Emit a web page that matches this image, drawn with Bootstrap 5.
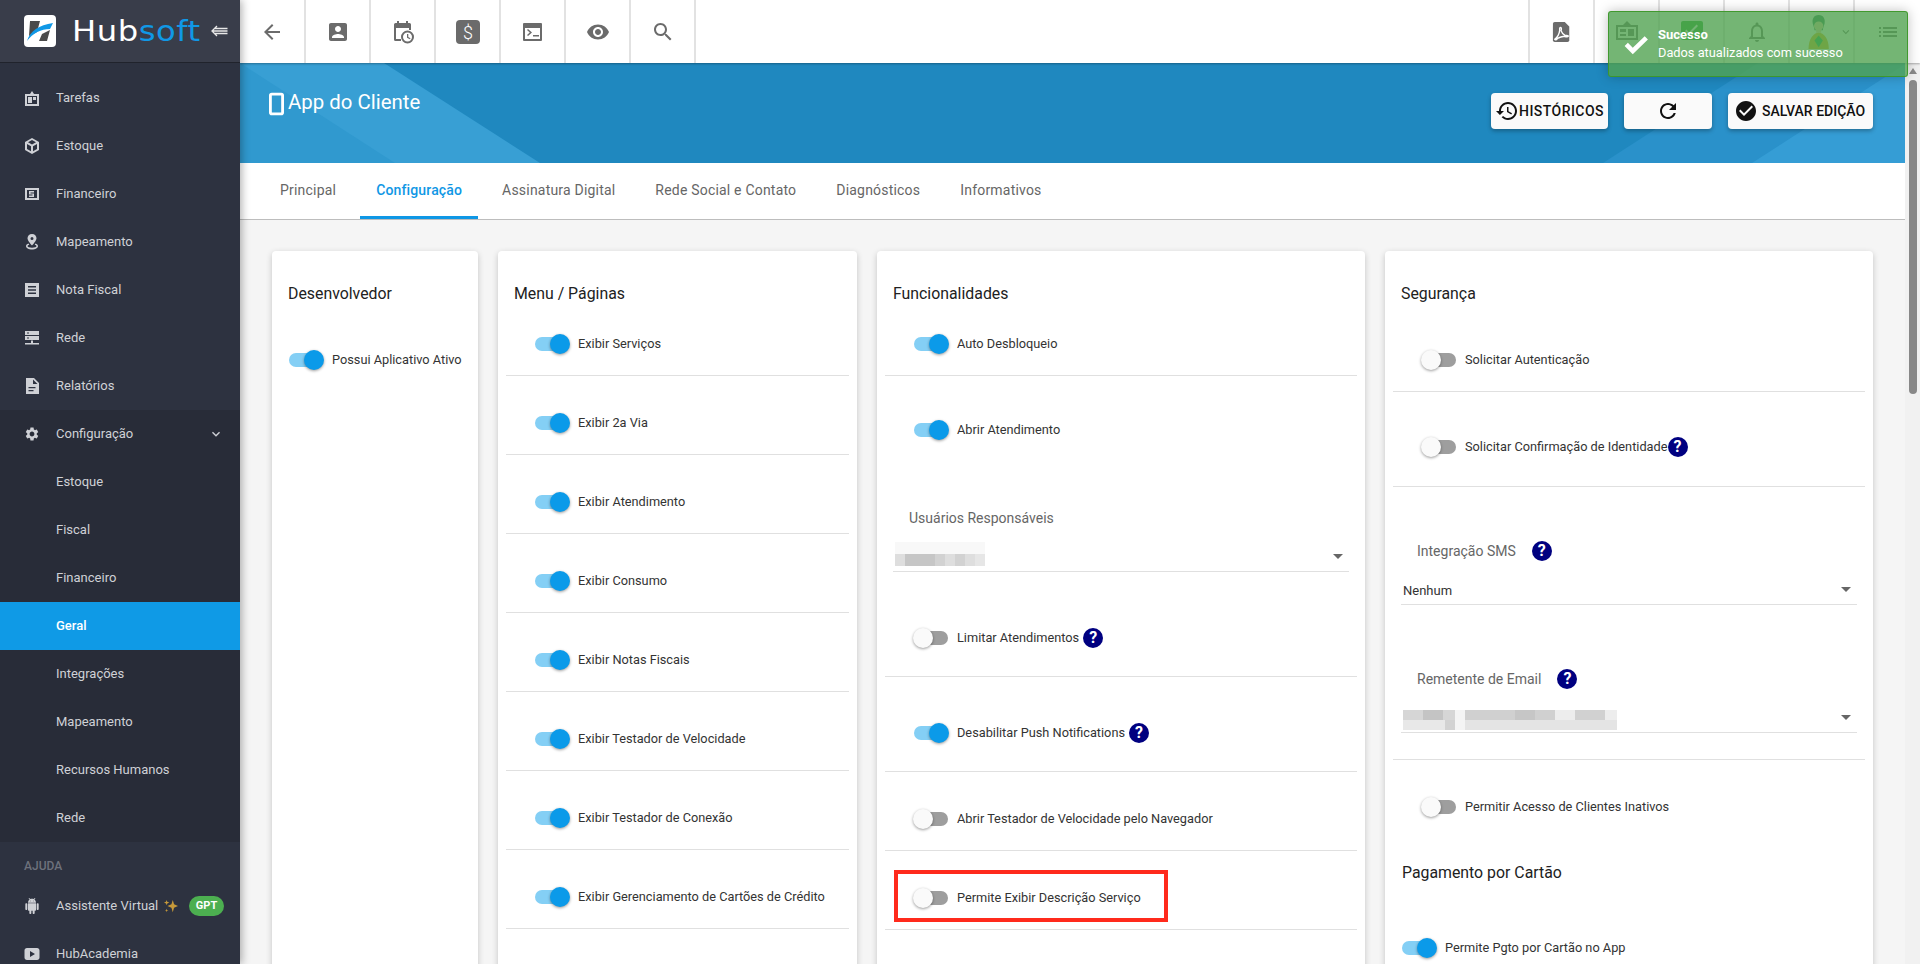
<!DOCTYPE html>
<html lang="pt-BR">
<head>
<meta charset="utf-8">
<title>App do Cliente</title>
<link href="https://cdn.jsdelivr.net/npm/bootstrap@5.3.0/dist/css/bootstrap.min.css" rel="stylesheet">
<style>
html,body{height:964px;overflow:hidden}
body{font-family:Roboto,"Liberation Sans",sans-serif;background:#f5f5f5;color:#333;font-size:12.75px}
.side{width:240px;height:964px;flex:none;background:#2d3240;color:#cfd1d6;box-shadow:2px 0 8px rgba(0,0,0,.3);z-index:3;overflow:hidden}
.side-head{height:63px;flex:none;background:#393d4a;border-bottom:1px solid #20232c;padding-left:24px;margin-bottom:11px}
.logo-box{width:32px;height:32px;background:#fff;border-radius:4px;flex:none}
.logo-word{font-family:"DejaVu Sans",sans-serif;font-size:29px;line-height:32px;color:#fff;margin-left:16px;letter-spacing:.5px;font-weight:400;width:130px;white-space:nowrap;transform:scaleX(1.11);transform-origin:left center}
.logo-word span{color:#1098e6}
.back-arrows{margin-left:9px}
.s-item{height:48px;flex:none;padding-left:24px;font-size:13px;color:#cfd1d6}
.s-item svg.ic{width:16px;height:16px;fill:#cfd1d6;flex:none;margin-right:16px}
.s-sub{background:#282c38;flex:none}
.s-sub .s-item.sub{padding-left:56px}
.s-item.on{background:#0f9ae6;color:#fff;font-weight:500}
.s-chev{margin-left:auto;margin-right:16px;width:16px;height:16px;fill:#cfd1d6}
.s-cap{height:40px;flex:none;padding:17px 0 0 24px;font-size:12px;font-weight:500;color:#6d717c;line-height:14px}
.gpt{background:#4caf50;color:#fff;font-weight:700;font-size:11px;border-radius:10px;width:35px;height:20px;margin-left:auto;margin-right:16px;line-height:20px;text-align:center}
.spark{width:14px;height:14px;fill:#c79a3a;margin-left:6px}
.main-col{min-width:0}
.topbar{height:63px;background:#fff;flex:none;box-shadow:0 1px 2px rgba(0,0,0,.3);z-index:2}
.t-cell{width:65px;height:63px;border-right:2px solid #e2e2e2;flex:none}
.t-cell:first-child{width:66px}
.t-cell svg{fill:#6b6b6b}
.t-right{margin-left:auto}
.t-right .t-cell:first-child{width:65px;box-shadow:-2px 0 0 #e2e2e2}
.t-right .t-cell:last-child{border-right:0}
.under{min-height:0}
.page{min-width:0;overflow:hidden}
.hero{height:100px;background:#1f88bf;color:#fff;padding:0 32px 0 29px}
.hero-art{left:0;top:0;width:100%;height:100%}
.hero-title{font-size:20.4px;line-height:28px;margin-top:25px}
.hero-btn{height:36px;background:#fafafa;border:0;border-radius:4px;box-shadow:0 2px 4px rgba(0,0,0,.3);color:#111;font-size:14px;font-weight:500;letter-spacing:.45px;padding:0}
.hb1{width:117px}.hb2{width:88px}.hb3{width:145px;letter-spacing:0;padding-left:6px}
.hero-btns{gap:16px;margin-top:30px}
.tabs-bar{height:57px;background:#fff;border-bottom:1px solid #bdbdbd;padding-left:24px;gap:8px}
.tab-i{padding:0 16px;line-height:54px;font-size:14px;color:#666;font-weight:400;letter-spacing:.2px;height:56px}
.tab-i.act{color:#0f97e5;font-weight:500;letter-spacing:.15px;border-bottom:3px solid #0f97e5}
.cards{padding:31px 32px 0;gap:20px;height:800px}
.cardx{background:#fff;border-radius:4px;box-shadow:0 2px 6px rgba(0,0,0,.2);padding:0 8px;flex:none;border:0}
.w1{width:206px}.w2{width:359px}.w3{width:488px}.w4{width:488px}
.c-title{padding:31px 0 0 8px;font-size:15.85px;line-height:24px;color:#212121;margin-bottom:-9px;font-weight:400}
.rw{padding:37px 8px 21px 29px;line-height:20px;color:#333;border-bottom:1px solid #e0e0e0}
.rw.tall{padding:46px 8px 28px 29px}
.rw.dev{border:0;padding:53px 0 0 9px}
.sw{position:relative;width:34px;height:14px;border-radius:7px;background:#9e9e9e;flex:none;margin-right:9px}
.sw::after{content:"";position:absolute;left:-1px;top:-3px;width:20px;height:20px;border-radius:50%;background:#fafafa;box-shadow:0 1px 3px rgba(0,0,0,.4)}
.sw.ok{background:#84cff5}
.sw.ok::after{left:15px;background:#0b9ae9}
.qm{width:20px;height:20px;border-radius:50%;background:#000080;color:#fff;font-weight:700;font-size:16px;line-height:20px;text-align:center;flex:none;display:inline-block}
.fld-lab{height:20px;line-height:20px;padding-left:16px;margin-left:8px;color:#666;font-size:14px}
.fld-lab .qm{margin-left:16px}
.fld{height:44px;margin:0 8px;border-bottom:1px solid #e0e0e0;position:relative;font-size:13px;color:#333}
.fld-arrow{position:absolute;right:6px;top:26px;width:0;height:0;border-left:5px solid transparent;border-right:5px solid transparent;border-top:5px solid #666}
.fld-val{position:absolute;left:2px;bottom:3px;line-height:20px}
.mosaic{position:absolute;left:2px;display:block}
.mk1{top:14px}.mk2{top:21px}
.red-mark{position:absolute;left:9px;top:19px;width:274px;height:52px;border:4px solid #ff2a1c;pointer-events:none}
.rel{position:relative}
.sb{width:15px;flex:none;background:#f1f1f1;position:relative}
.sb-up{width:0;height:0;border-left:4px solid transparent;border-right:4px solid transparent;border-bottom:6px solid #8a8a8a;margin:5px auto 0}
.sb-th{width:8px;height:314px;background:#888;border-radius:4px;margin:6px auto 0}
.toastx{position:absolute;left:1608px;top:11px;width:300px;height:66px;background:rgba(81,163,81,.8);border:1px solid rgba(60,150,40,.9);border-radius:3px;box-shadow:0 0 12px rgba(0,0,0,.25);color:#fff;z-index:9;font-size:12.8px;line-height:18px;padding:14px 0 0 49px}
.toastx b{display:block;font-weight:700;font-size:13px}
.toast-ic{position:absolute;left:14px;top:21px;width:26px;height:26px;fill:#fff}
.mt-a{margin-top:54px}.mt-b{margin-top:64px}.mt-c{margin-top:68px}
.gap10{margin-bottom:10px}
.hr-x{border-bottom:1px solid #e0e0e0;height:27px}
.atd{padding:44px 0 0 29px;line-height:20px}
.sec1{padding-top:53px;padding-bottom:21px}
.rw.sec1{padding-top:53px}
.rw.sec2{padding:45px 8px 29px 29px}
.inat{padding:37px 0 0 29px;line-height:20px}
.pag{padding:44px 0 0 9px;font-size:15.85px;line-height:24px;color:#212121}
.pgto{padding:53px 0 0 9px;line-height:20px}
</style>
</head>
<body class="d-flex">

<aside class="side d-flex flex-column">
  <div class="side-head d-flex align-items-center">
    <svg class="logo-box" viewBox="0 0 32 32"><path fill="#4a4a4a" d="M6 6h10l-3 11-8 4zM18 19l8-4-3 11h-8z"/><path fill="#1098e6" d="M3 26C6 16 15 10 29 8l-3 6C17 14 9 18 3 26z"/></svg>
    <div class="logo-word">Hub<span>soft</span></div>
    <svg class="back-arrows" width="17" height="12" viewBox="0 0 17 12" fill="none" stroke="#e8e8e8" stroke-width="1.300"><path d="M6 1L1 6l5 5M4 3.500h12.500M2 6h14.500M4 8.500h12.500"/></svg>
  </div>
  <div class="s-item d-flex align-items-center"><svg class="ic" viewBox="0 0 16 16"><path fill-rule="evenodd" d="M1 4h5l2-3 2 3h5v12H1zM3 6v8h10V6zM4 7h4v6H4zM9 7h3v3H9z"/></svg>Tarefas</div>
  <div class="s-item d-flex align-items-center"><svg class="ic" viewBox="0 0 16 16"><path fill-rule="evenodd" d="M8 0l7 4v8l-7 4-7-4V4zM8 2L4 4.300 8 6.600l4-2.300zM3 6v5l4 2.300V8.300zM13 6L9 8.300v5l4-2.300z"/></svg>Estoque</div>
  <div class="s-item d-flex align-items-center"><svg class="ic" viewBox="0 0 16 16"><path fill-rule="evenodd" d="M1 2h14v12H1zM3 4v8h10V4zM5 5h5v1.500H6.500v1H10V11H5V9.500h3.500v-1H5z"/></svg>Financeiro</div>
  <div class="s-item d-flex align-items-center"><svg class="ic" viewBox="0 0 16 16"><path fill-rule="evenodd" d="M8 0c2.800 0 4.500 2 4.500 4.300C12.500 7 8 11.500 8 11.500S3.500 7 3.500 4.300C3.500 2 5.200 0 8 0zm0 3a1.500 1.500 0 100 3 1.500 1.500 0 000-3z"/><path d="M2 12c0-1.200 1-2 2.500-2.500l.8 1.200C4.300 11 3.500 11.500 3.500 12c0 1 2 1.700 4.500 1.700s4.500-.7 4.500-1.700c0-.5-.8-1-1.800-1.300l.8-1.200C13 10 14 10.800 14 12c0 2-2.700 3.500-6 3.500S2 14 2 12z"/></svg>Mapeamento</div>
  <div class="s-item d-flex align-items-center"><svg class="ic" viewBox="0 0 16 16"><path fill-rule="evenodd" d="M1 1h14v14H1zM4 4v1.500h8V4zM4 7.200v1.500h8V7.200zM4 10.500V12h8v-1.500z"/></svg>Nota Fiscal</div>
  <div class="s-item d-flex align-items-center"><svg class="ic" viewBox="0 0 16 16"><path fill-rule="evenodd" d="M1 1h14v4H1zM1 6h14v4H1zM3 2.500V3.500h2v-1zM3 7.500V8.500h2v-1zM7 10.500h2V13h6v1.500H1V13h6z"/></svg>Rede</div>
  <div class="s-item d-flex align-items-center"><svg class="ic" viewBox="0 0 16 16"><path fill-rule="evenodd" d="M2 0h8l5 5v11H2zM9 1.500V6h4.500zM4.500 9v1.300h7V9zM4.500 12v1.300h5V12z"/></svg>Relatórios</div>
  <div class="s-sub">
    <div class="s-item d-flex align-items-center"><svg class="ic" viewBox="0 0 24 24"><path d="M19.140 12.940c.04-.3.06-.61.06-.94 0-.32-.02-.64-.07-.94l2.030-1.580c.18-.14.23-.41.12-.61l-1.920-3.320c-.12-.22-.37-.29-.59-.22l-2.390.96c-.5-.38-1.030-.7-1.620-.94l-.36-2.540c-.04-.24-.24-.41-.48-.41h-3.840c-.24 0-.43.17-.47.41l-.36 2.540c-.59.24-1.130.57-1.620.94l-2.390-.96c-.22-.08-.47 0-.59.22L2.740 8.870c-.12.21-.08.47.12.61l2.030 1.580c-.05.3-.09.63-.09.94s.02.64.07.94l-2.030 1.580c-.18.14-.23.41-.12.61l1.920 3.320c.12.22.37.29.59.22l2.390-.96c.5.38 1.030.7 1.620.94l.36 2.540c.05.24.24.41.48.41h3.840c.24 0 .44-.17.47-.41l.36-2.540c.59-.24 1.130-.56 1.620-.94l2.390.96c.22.08.47 0 .59-.22l1.920-3.320c.12-.22.07-.47-.12-.61l-2.010-1.580zM12 15.600c-1.980 0-3.600-1.620-3.600-3.600s1.620-3.600 3.600-3.600 3.600 1.620 3.600 3.600-1.620 3.600-3.600 3.600z"/></svg>Configuração<svg class="s-chev" viewBox="0 0 24 24"><path d="M16.590 8.590L12 13.170 7.410 8.590 6 10l6 6 6-6z"/></svg></div>
    <div class="s-item sub d-flex align-items-center">Estoque</div>
    <div class="s-item sub d-flex align-items-center">Fiscal</div>
    <div class="s-item sub d-flex align-items-center">Financeiro</div>
    <div class="s-item sub on d-flex align-items-center">Geral</div>
    <div class="s-item sub d-flex align-items-center">Integrações</div>
    <div class="s-item sub d-flex align-items-center">Mapeamento</div>
    <div class="s-item sub d-flex align-items-center">Recursos Humanos</div>
    <div class="s-item sub d-flex align-items-center">Rede</div>
  </div>
  <div class="s-cap">AJUDA</div>
  <div class="s-item d-flex align-items-center"><svg class="ic" viewBox="0 0 24 24"><path d="M6 18c0 .55.45 1 1 1h1v3.500c0 .83.67 1.500 1.500 1.500s1.500-.67 1.500-1.500V19h2v3.500c0 .83.67 1.500 1.500 1.500s1.500-.67 1.500-1.500V19h1c.55 0 1-.45 1-1V8H6v10zM3.500 8C2.670 8 2 8.670 2 9.500v7c0 .83.67 1.500 1.500 1.500S5 17.330 5 16.500v-7C5 8.670 4.330 8 3.500 8zm17 0c-.83 0-1.500.67-1.500 1.500v7c0 .83.67 1.500 1.500 1.500s1.500-.67 1.500-1.500v-7c0-.83-.67-1.500-1.500-1.500zm-4.970-5.840l1.300-1.300c.2-.2.2-.51 0-.71-.2-.2-.51-.2-.71 0l-1.480 1.480C13.850 1.230 12.950 1 12 1c-.96 0-1.860.23-2.660.63L7.850.15c-.2-.2-.51-.2-.71 0-.2.2-.2.51 0 .71l1.310 1.310C6.970 3.260 6 5.010 6 7h12c0-1.990-.97-3.750-2.470-4.840zM10 5H9V4h1v1zm5 0h-1V4h1v1z"/></svg>Assistente Virtual<svg class="spark" viewBox="0 0 16 16"><path d="M10 1l1.500 5L16 8l-4.500 2L10 15l-1.500-5L4 8l4.500-2zM3 1l.7 2L6 4l-2.300 1L3 7l-.7-2L0 4l2.300-1zM3 11l.5 1.500L5 13l-1.500.5L3 15l-.5-1.500L1 13l1.500-.5z"/></svg><span class="gpt">GPT</span></div>
  <div class="s-item d-flex align-items-center"><svg class="ic" viewBox="0 0 16 16"><path fill-rule="evenodd" d="M3 2h10c1.500 0 2.500 1 2.500 2.500v7c0 1.500-1 2.500-2.500 2.500H3c-1.500 0-2.500-1-2.500-2.500v-7C.5 3 1.500 2 3 2zm3 3v6l5-3z"/></svg>HubAcademia</div>
</aside>

<div class="main-col flex-grow-1 d-flex flex-column">
  <header class="topbar d-flex">
    <div class="t-cell d-flex align-items-center justify-content-center"><svg width="24" height="24" viewBox="0 0 24 24"><path d="M20 11H7.830l5.590-5.590L12 4l-8 8 8 8 1.410-1.410L7.830 13H20v-2z"/></svg></div>
    <div class="t-cell d-flex align-items-center justify-content-center"><svg width="24" height="24" viewBox="0 0 24 24"><path d="M3 5v14c0 1.100.89 2 2 2h14c1.100 0 2-.9 2-2V5c0-1.100-.9-2-2-2H5c-1.110 0-2 .9-2 2zm12 4c0 1.660-1.340 3-3 3s-3-1.340-3-3 1.340-3 3-3 3 1.340 3 3zm-9 8c0-2 4-3.100 6-3.100s6 1.100 6 3.100v1H6v-1z"/></svg></div>
    <div class="t-cell d-flex align-items-center justify-content-center"><svg width="24" height="24" viewBox="0 0 24 24"><path fill-rule="evenodd" d="M6 1h2v2h7V1h2v2h1.500A1.500 1.500 0 0120 4.500V10h-2V8H5v11h5v2H4.500A1.500 1.500 0 013 19.500v-15A1.500 1.500 0 014.500 3H6z"/><path fill-rule="evenodd" d="M16.500 10.500a6.500 6.500 0 110 13 6.500 6.500 0 010-13zm0 2a4.500 4.500 0 100 9 4.500 4.500 0 000-9zM16 14h1.300v3l2.200 1.300-.6 1L16 17.700z"/></svg></div>
    <div class="t-cell d-flex align-items-center justify-content-center"><svg width="24" height="24" viewBox="0 0 24 24"><rect width="24" height="24" rx="4"/><text x="12" y="18.500" text-anchor="middle" font-family="Roboto,sans-serif" font-size="18" font-weight="300" fill="#fff">$</text></svg></div>
    <div class="t-cell d-flex align-items-center justify-content-center"><svg width="24" height="24" viewBox="0 0 24 24"><path fill-rule="evenodd" d="M3 3h17a1 1 0 011 1v16a1 1 0 01-1 1H3a1 1 0 01-1-1V4a1 1 0 011-1zm1 5v11h15V8z"/><path d="M6 10l1-1 4 3.500-4 3.500-1-1 2.800-2.500zM12 15h6v1.500h-6z"/></svg></div>
    <div class="t-cell d-flex align-items-center justify-content-center"><svg width="24" height="24" viewBox="0 0 24 24"><path d="M12 4.500C7 4.500 2.730 7.610 1 12c1.730 4.390 6 7.500 11 7.500s9.270-3.110 11-7.500c-1.730-4.390-6-7.500-11-7.500zM12 17c-2.760 0-5-2.240-5-5s2.240-5 5-5 5 2.240 5 5-2.240 5-5 5zm0-8c-1.660 0-3 1.340-3 3s1.340 3 3 3 3-1.340 3-3-1.340-3-3-3z"/></svg></div>
    <div class="t-cell d-flex align-items-center justify-content-center"><svg width="24" height="24" viewBox="0 0 24 24"><path d="M15.500 14h-.79l-.28-.27C15.410 12.590 16 11.110 16 9.500 16 5.910 13.090 3 9.500 3S3 5.910 3 9.500 5.910 16 9.500 16c1.610 0 3.090-.59 4.230-1.570l.27.28v.79l5 4.990L20.490 19l-4.990-5zm-6 0C7.010 14 5 11.990 5 9.500S7.010 5 9.500 5 14 7.010 14 9.500 11.990 14 9.500 14z"/></svg></div>
    <div class="t-right d-flex">
      <div class="t-cell d-flex align-items-center justify-content-center"><svg width="20" height="20" viewBox="0 0 22 22"><path d="M3 0h11l5 5v15a2 2 0 01-2 2H3a2 2 0 01-2-2V2a2 2 0 012-2z"/><path d="M3 19c3-2 5-6 5.500-10-.3-1.500 0-3 1-3s1 2 .5 3.500C11 12 13 14 14 14.500c2 0 4 0 4 1s-2 1-4.500.2C11 16 8 17 6 18c-1 2-2.500 2-3 1z" fill="none" stroke="#fff" stroke-width="1.500"/></svg></div>
      <div class="t-cell d-flex align-items-center justify-content-center"><svg width="24" height="24" viewBox="0 0 24 24"><path fill-rule="evenodd" d="M1 5h7l4-4 4 4h7v15H1zM3 7v11h18V7zM5 9h6v3H5zM5 14h6v2H5zM13 9h6v7h-6z"/></svg></div>
      <div class="t-cell d-flex align-items-center justify-content-center"><svg width="24" height="24" viewBox="0 0 24 24"><rect x="1" y="1" width="22" height="19" rx="2" fill="#22a52a"/><path d="M9 15l-4-4 1.400-1.400L9 12.200l7.600-7.600L18 6z" fill="#fff"/></svg></div>
      <div class="t-cell d-flex align-items-center justify-content-center"><svg width="24" height="24" viewBox="0 0 24 24"><path d="M12 22c1.100 0 2-.9 2-2h-4c0 1.100.9 2 2 2zm6-6v-5c0-3.070-1.630-5.640-4.500-6.320V4c0-.83-.67-1.500-1.500-1.500s-1.500.67-1.500 1.500v.68C7.640 5.360 6 7.920 6 11v5l-2 2v1h16v-1l-2-2zm-2 1H8v-6c0-2.480 1.510-4.500 4-4.500s4 2.020 4 4.500v6z"/></svg></div>
      <div class="t-cell d-flex align-items-center justify-content-start ps-3"><svg width="26" height="38" viewBox="0 0 30 40"><path d="M15 0c6 0 8 5 7 10-1 3-2 6-2 8H10c0-2-1-5-2-8C7 5 9 0 15 0z" fill="#2e7d5b"/><circle cx="15" cy="13" r="5.500" fill="#ecc7a5"/><path d="M12 17h6v4h-6z" fill="#ecc7a5"/><path d="M3 40c0-12 6-19 12-19s12 7 12 19z" fill="#e2ad1c"/><path d="M10 30l5-6 5 6-5 8z" fill="#18a34d"/></svg><svg width="14" height="14" viewBox="0 0 24 24" class="ms-2"><path d="M16.590 8.590L12 13.170 7.410 8.590 6 10l6 6 6-6z"/></svg></div>
      <div class="t-cell d-flex align-items-center justify-content-center"><svg width="24" height="24" viewBox="0 0 24 24"><path d="M3 13h2v-2H3v2zm0 4h2v-2H3v2zm0-8h2V7H3v2zm4 4h14v-2H7v2zm0 4h14v-2H7v2zM7 7v2h14V7H7z"/></svg></div>
    </div>
  </header>

  <div class="under flex-grow-1 d-flex">
    <div class="page flex-grow-1">
      <section class="hero position-relative d-flex justify-content-between">
        <svg class="hero-art position-absolute" viewBox="0 0 1665 100" preserveAspectRatio="none"><path fill="#389fd4" d="M0 0H144L300 100H0z"/><path fill="#3099cf" d="M0 0L155 100H0z"/><path fill="#2a91ca" d="M1363 100L1518 0H1665V100z"/><path fill="#359dd5" d="M1512 100L1667 0V100z"/></svg>
        <div class="hero-title position-relative d-flex align-items-start"><svg width="15" height="24" viewBox="0 0 16 24" class="me-1 mt-1" fill="none" stroke="#fff" stroke-width="3"><rect x="1.500" y="1.500" width="13" height="21" rx="1.500"/></svg><span>App do Cliente</span></div>
        <div class="hero-btns position-relative d-flex align-items-start">
          <button class="hero-btn hb1 d-flex align-items-center justify-content-center" type="button"><svg width="24" height="24" viewBox="0 0 24 24" fill="#111"><path d="M13 3c-4.970 0-9 4.030-9 9H1l3.890 3.890.07.14L9 12H6c0-3.870 3.130-7 7-7s7 3.130 7 7-3.130 7-7 7c-1.930 0-3.680-.79-4.940-2.060l-1.420 1.420C8.270 19.990 10.510 21 13 21c4.970 0 9-4.030 9-9s-4.030-9-9-9zm-1 5v5l4.280 2.540.72-1.210-3.500-2.080V8H12z"/></svg>HISTÓRICOS</button>
          <button class="hero-btn hb2 d-flex align-items-center justify-content-center" type="button" aria-label="Atualizar"><svg width="24" height="24" viewBox="0 0 24 24" fill="#111"><path d="M17.650 6.350C16.200 4.900 14.210 4 12 4c-4.420 0-7.990 3.580-7.990 8s3.570 8 7.990 8c3.730 0 6.840-2.550 7.730-6h-2.080c-.82 2.330-3.040 4-5.650 4-3.310 0-6-2.690-6-6s2.690-6 6-6c1.660 0 3.140.69 4.220 1.780L13 11h7V4l-2.350 2.350z"/></svg></button>
          <button class="hero-btn hb3 d-flex align-items-center justify-content-start" type="button"><svg width="24" height="24" viewBox="0 0 24 24" fill="#111" class="me-1"><path d="M12 2C6.480 2 2 6.480 2 12s4.480 10 10 10 10-4.480 10-10S17.520 2 12 2zm-2 15l-5-5 1.410-1.410L10 14.170l7.590-7.590L19 8l-9 9z"/></svg>SALVAR EDIÇÃO</button>
        </div>
      </section>

      <nav class="tabs-bar d-flex">
        <div class="tab-i">Principal</div>
        <div class="tab-i act">Configuração</div>
        <div class="tab-i">Assinatura Digital</div>
        <div class="tab-i">Rede Social e Contato</div>
        <div class="tab-i">Diagnósticos</div>
        <div class="tab-i">Informativos</div>
      </nav>

      <div class="cards d-flex align-items-stretch">
        <div class="cardx w1">
          <div class="c-title">Desenvolvedor</div>
          <div class="rw dev d-flex align-items-center"><span class="sw ok"></span>Possui Aplicativo Ativo</div>
        </div>
        <div class="cardx w2">
          <div class="c-title">Menu / Páginas</div>
          <div class="rw d-flex align-items-center"><span class="sw ok"></span>Exibir Serviços</div>
          <div class="rw d-flex align-items-center"><span class="sw ok"></span>Exibir 2a Via</div>
          <div class="rw d-flex align-items-center"><span class="sw ok"></span>Exibir Atendimento</div>
          <div class="rw d-flex align-items-center"><span class="sw ok"></span>Exibir Consumo</div>
          <div class="rw d-flex align-items-center"><span class="sw ok"></span>Exibir Notas Fiscais</div>
          <div class="rw d-flex align-items-center"><span class="sw ok"></span>Exibir Testador de Velocidade</div>
          <div class="rw d-flex align-items-center"><span class="sw ok"></span>Exibir Testador de Conexão</div>
          <div class="rw d-flex align-items-center"><span class="sw ok"></span>Exibir Gerenciamento de Cartões de Crédito</div>
        </div>
        <div class="cardx w3">
          <div class="c-title">Funcionalidades</div>
          <div class="rw d-flex align-items-center"><span class="sw ok"></span>Auto Desbloqueio</div>
          <div class="atd d-flex align-items-center"><span class="sw ok"></span>Abrir Atendimento</div>
          <div class="fld-lab mt-c">Usuários Responsáveis</div>
          <div class="fld gap10">
            <svg class="mosaic mk1" width="90" height="24" viewBox="0 0 90 24"><path fill="#f8f8f8" d="M0 0h90v12H0z"/><path fill="#dedede" d="M0 12h90v12H0z"/><path fill="#c6c6c6" d="M10 12h30v12H10z"/><path fill="#d2d2d2" d="M40 12h10v12H40zM60 12h10v12H60z"/><path fill="#e6e6e6" d="M80 12h10v12H80z"/></svg>
            <i class="fld-arrow"></i>
          </div>
          <div class="rw tall d-flex align-items-center"><span class="sw"></span>Limitar Atendimentos<span class="qm ms-1">?</span></div>
          <div class="rw tall d-flex align-items-center"><span class="sw ok"></span>Desabilitar Push Notifications<span class="qm ms-1">?</span></div>
          <div class="rw d-flex align-items-center"><span class="sw"></span>Abrir Testador de Velocidade pelo Navegador</div>
          <div class="rw rel d-flex align-items-center"><span class="sw"></span>Permite Exibir Descrição Serviço<i class="red-mark"></i></div>
        </div>
        <div class="cardx w4">
          <div class="c-title">Segurança</div>
          <div class="rw sec1 d-flex align-items-center"><span class="sw"></span>Solicitar Autenticação</div>
          <div class="rw sec2 d-flex align-items-center"><span class="sw"></span>Solicitar Confirmação de Identidade<span class="qm">?</span></div>
          <div class="fld-lab mt-a d-flex align-items-center">Integração SMS<span class="qm">?</span></div>
          <div class="fld"><span class="fld-val">Nenhum</span><i class="fld-arrow"></i></div>
          <div class="fld-lab mt-b d-flex align-items-center">Remetente de Email<span class="qm">?</span></div>
          <div class="fld">
            <svg class="mosaic mk2" width="214" height="20" viewBox="0 0 214 20"><path fill="#d6d6d6" d="M0 0h52v10H0z"/><path fill="#c4c4c4" d="M20 0h20v10H20z"/><path fill="#f4f4f4" d="M52 0h10v20H52z"/><path fill="#d0d0d0" d="M62 0h90v10H62z"/><path fill="#c6c6c6" d="M112 0h20v10h-20zM172 0h30v10h-30z"/><path fill="#dcdcdc" d="M152 0h62v10h-62z" fill-opacity=".5"/><path fill="#e8e8e8" d="M0 10h52v10H0z"/><path fill="#d2d2d2" d="M42 10h10v10H42z"/><path fill="#e4e4e4" d="M62 10h152v10H62z"/></svg>
            <i class="fld-arrow"></i>
          </div>
          <div class="hr-x"></div>
          <div class="inat d-flex align-items-center"><span class="sw"></span>Permitir Acesso de Clientes Inativos</div>
          <div class="pag">Pagamento por Cartão</div>
          <div class="pgto d-flex align-items-center"><span class="sw ok"></span>Permite Pgto por Cartão no App</div>
        </div>
      </div>
    </div>
    <div class="sb"><div class="sb-up"></div><div class="sb-th"></div></div>
  </div>
</div>

<div class="toastx" role="alert">
  <svg class="toast-ic" viewBox="0 0 24 24"><path d="M9 19.500L1.500 12l3-3L9 13.500 20 3l3 3z"/></svg>
  <b>Sucesso</b>Dados atualizados com sucesso
</div>
<script src="https://cdn.jsdelivr.net/npm/bootstrap@5.3.0/dist/js/bootstrap.bundle.min.js"></script>
</body>
</html>
